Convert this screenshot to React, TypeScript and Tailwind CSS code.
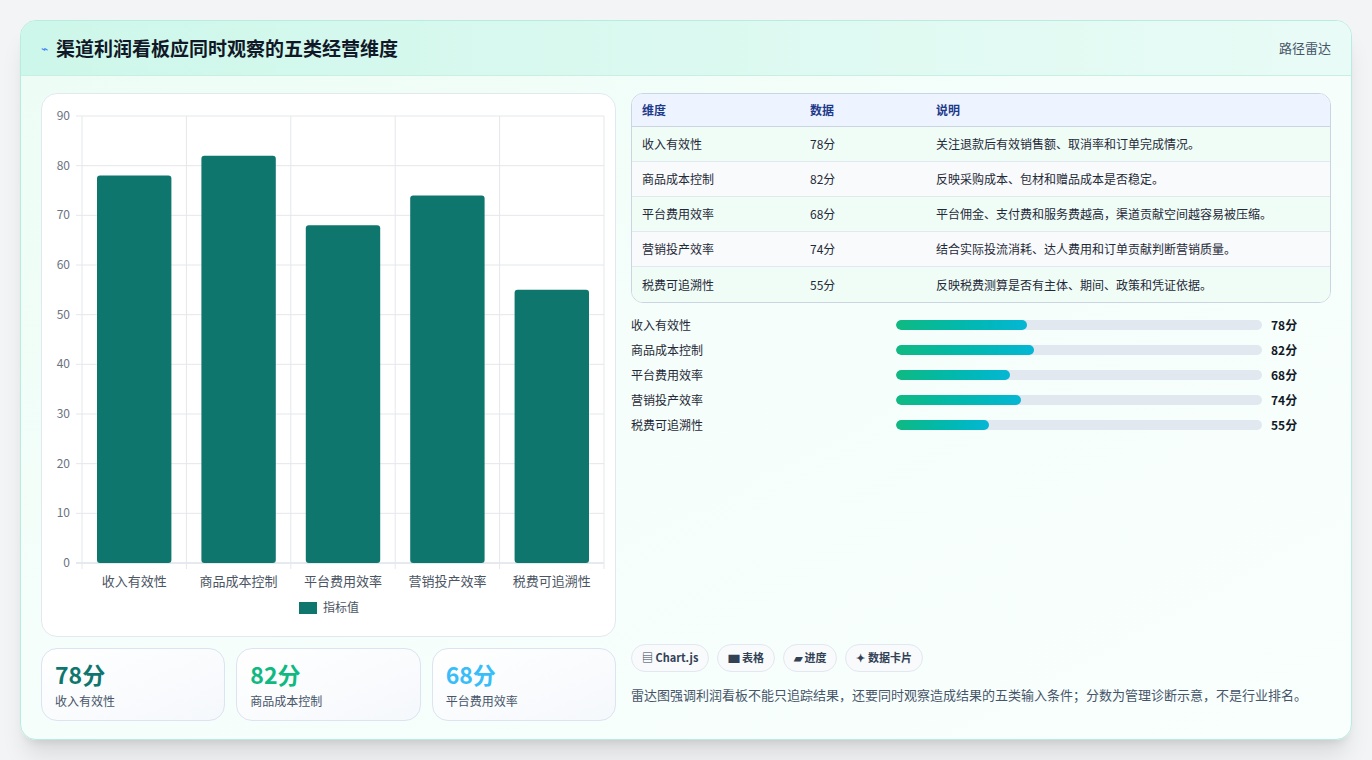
import React from 'react';

const rows = [
  { name: '收入有效性', v: 78, note: '关注退款后有效销售额、取消率和订单完成情况。' },
  { name: '商品成本控制', v: 82, note: '反映采购成本、包材和赠品成本是否稳定。' },
  { name: '平台费用效率', v: 68, note: '平台佣金、支付费和服务费越高，渠道贡献空间越容易被压缩。' },
  { name: '营销投产效率', v: 74, note: '结合实际投流消耗、达人费用和订单贡献判断营销质量。' },
  { name: '税费可追溯性', v: 55, note: '反映税费测算是否有主体、期间、政策和凭证依据。' },
];

const font = { fontFamily: '"Noto Sans CJK SC", "Noto Sans", sans-serif' };

function BarChart() {
  // plot area in svg coords (panel origin at 40,93)
  const x0 = 40, x1 = 562, yTop = 22, yBot = 469;
  const per = (yBot - yTop) / 90;
  const cw = (x1 - x0) / 5;
  return (
    <svg width="574" height="543" className="block">
      {[0, 10, 20, 30, 40, 50, 60, 70, 80, 90].map((t) => {
        const y = yBot - t * per;
        return (
          <g key={t}>
            <line x1={x0 - 6} x2={x1} y1={y} y2={y} stroke={t === 0 ? '#cbd5e1' : '#e5e7eb'} />
            <text x={x0 - 12} y={y + 4} textAnchor="end" fontSize="12" fill="#6b7280" style={font}>{t}</text>
          </g>
        );
      })}
      {[0, 1, 2, 3, 4, 5].map((i) => (
        <line key={i} x1={x0 + i * cw} x2={x0 + i * cw} y1={yTop} y2={yBot + 6} stroke="#e5e7eb" />
      ))}
      {rows.map((r, i) => {
        const h = r.v * per;
        return (
          <g key={r.name}>
            <rect x={x0 + i * cw + 15} y={yBot - h} width={cw - 30} height={h} rx="3" fill="#0f766e" />
            <text x={x0 + i * cw + cw / 2} y={yBot + 23} textAnchor="middle" fontSize="13" fill="#4b5563" style={font}>{r.name}</text>
          </g>
        );
      })}
      <rect x="257" y="508" width="18" height="12" fill="#0f766e" />
      <text x="281" y="518" fontSize="12" fill="#4b5563" style={font}>指标值</text>
    </svg>
  );
}

export default function App() {
  return (
    <div className="min-h-screen bg-[#f3f4f6] p-5" style={font}>
      <div className="h-[720px] rounded-2xl border border-[#b9ece0] bg-gradient-to-br from-[#ecfdf5] via-[#f6fefb] to-[#f8fffd] shadow-xl overflow-hidden flex flex-col">
        <div className="h-[55px] shrink-0 flex items-center justify-between px-5 bg-gradient-to-r from-[#cdf7ea] to-[#e9fbf6] border-b border-[#c7f0e4]">
          <div className="flex items-center gap-2">
            <span className="text-[#3b82f6] text-xs">⌁</span>
            <h1 className="text-[19px] font-bold text-[#111827]">渠道利润看板应同时观察的五类经营维度</h1>
          </div>
          <span className="text-[13px] text-[#475569]">路径雷达</span>
        </div>
        <div className="flex gap-[15px] px-5 pt-[17px]">
          <div className="w-[575px] flex flex-col gap-[11px]">
            <div className="h-[544px] rounded-2xl border border-[#e2e8f0] bg-white">
              <BarChart />
            </div>
            <div className="grid grid-cols-3 gap-[11px]">
              {[
                { v: '78分', l: '收入有效性', c: 'text-[#0f766e]' },
                { v: '82分', l: '商品成本控制', c: 'text-[#10b981]' },
                { v: '68分', l: '平台费用效率', c: 'text-[#38bdf8]' },
              ].map((s) => (
                <div key={s.l} className="h-[73px] rounded-2xl border border-[#dbe4f0] bg-gradient-to-br from-white to-[#f5f8fc] px-[13px] pt-[10px]">
                  <div className={`text-[23px] font-bold leading-[30px] ${s.c}`}>{s.v}</div>
                  <div className="text-[12px] text-[#475569] mt-[3px]">{s.l}</div>
                </div>
              ))}
            </div>
          </div>
          <div className="flex-1 flex flex-col">
            <div className="rounded-xl border border-[#cbd5e1] overflow-hidden bg-white">
              <div className="grid grid-cols-[168px_126px_1fr] h-[33px] items-center px-[10px] bg-[#eef4ff] border-b border-[#cbd5e1] text-[12px] font-semibold text-[#1e3a8a]">
                <span>维度</span><span>数据</span><span>说明</span>
              </div>
              {rows.map((r, i) => (
                <div key={r.name} className={`grid grid-cols-[168px_126px_1fr] h-[35px] items-center px-[10px] text-[12px] text-[#1f2937] ${i < 4 ? 'border-b border-[#e2e8f0]' : ''} ${i % 2 === 0 ? 'bg-[#f0fdf7]' : 'bg-[#f8fafc]'}`}>
                  <span>{r.name}</span><span>{r.v}分</span><span>{r.note}</span>
                </div>
              ))}
            </div>
            <div className="mt-[13px] flex flex-col gap-[7px]">
              {rows.map((r) => (
                <div key={r.name} className="flex items-center h-[18px] text-[12px]">
                  <span className="w-[265px] text-[#1f2937]">{r.name}</span>
                  <div className="w-[366px] h-[10px] rounded-full bg-[#e2e8f0] overflow-hidden">
                    <div className="h-full rounded-full bg-gradient-to-r from-[#10b981] to-[#06b6d4]" style={{ width: `${r.v * 0.46}%` }} />
                  </div>
                  <span className="ml-[9px] font-bold text-[#111827]">{r.v}分</span>
                </div>
              ))}
            </div>
            <div className="mt-auto mb-[17px]">
              <div className="flex gap-[8px]">
                {['▤ Chart.js', '▆ 表格', '▰ 进度', '✦ 数据卡片'].map((c) => (
                  <span key={c} className="h-[28px] px-[10px] flex items-center rounded-full border border-[#e2e8f0] bg-[#f8fafc] text-[11px] font-semibold text-[#334155]">{c}</span>
                ))}
              </div>
              <p className="mt-[13px] text-[13px] text-[#475569]">雷达图强调利润看板不能只追踪结果，还要同时观察造成结果的五类输入条件；分数为管理诊断示意，不是行业排名。</p>
            </div>
          </div>
        </div>
      </div>
    </div>
  );
}
